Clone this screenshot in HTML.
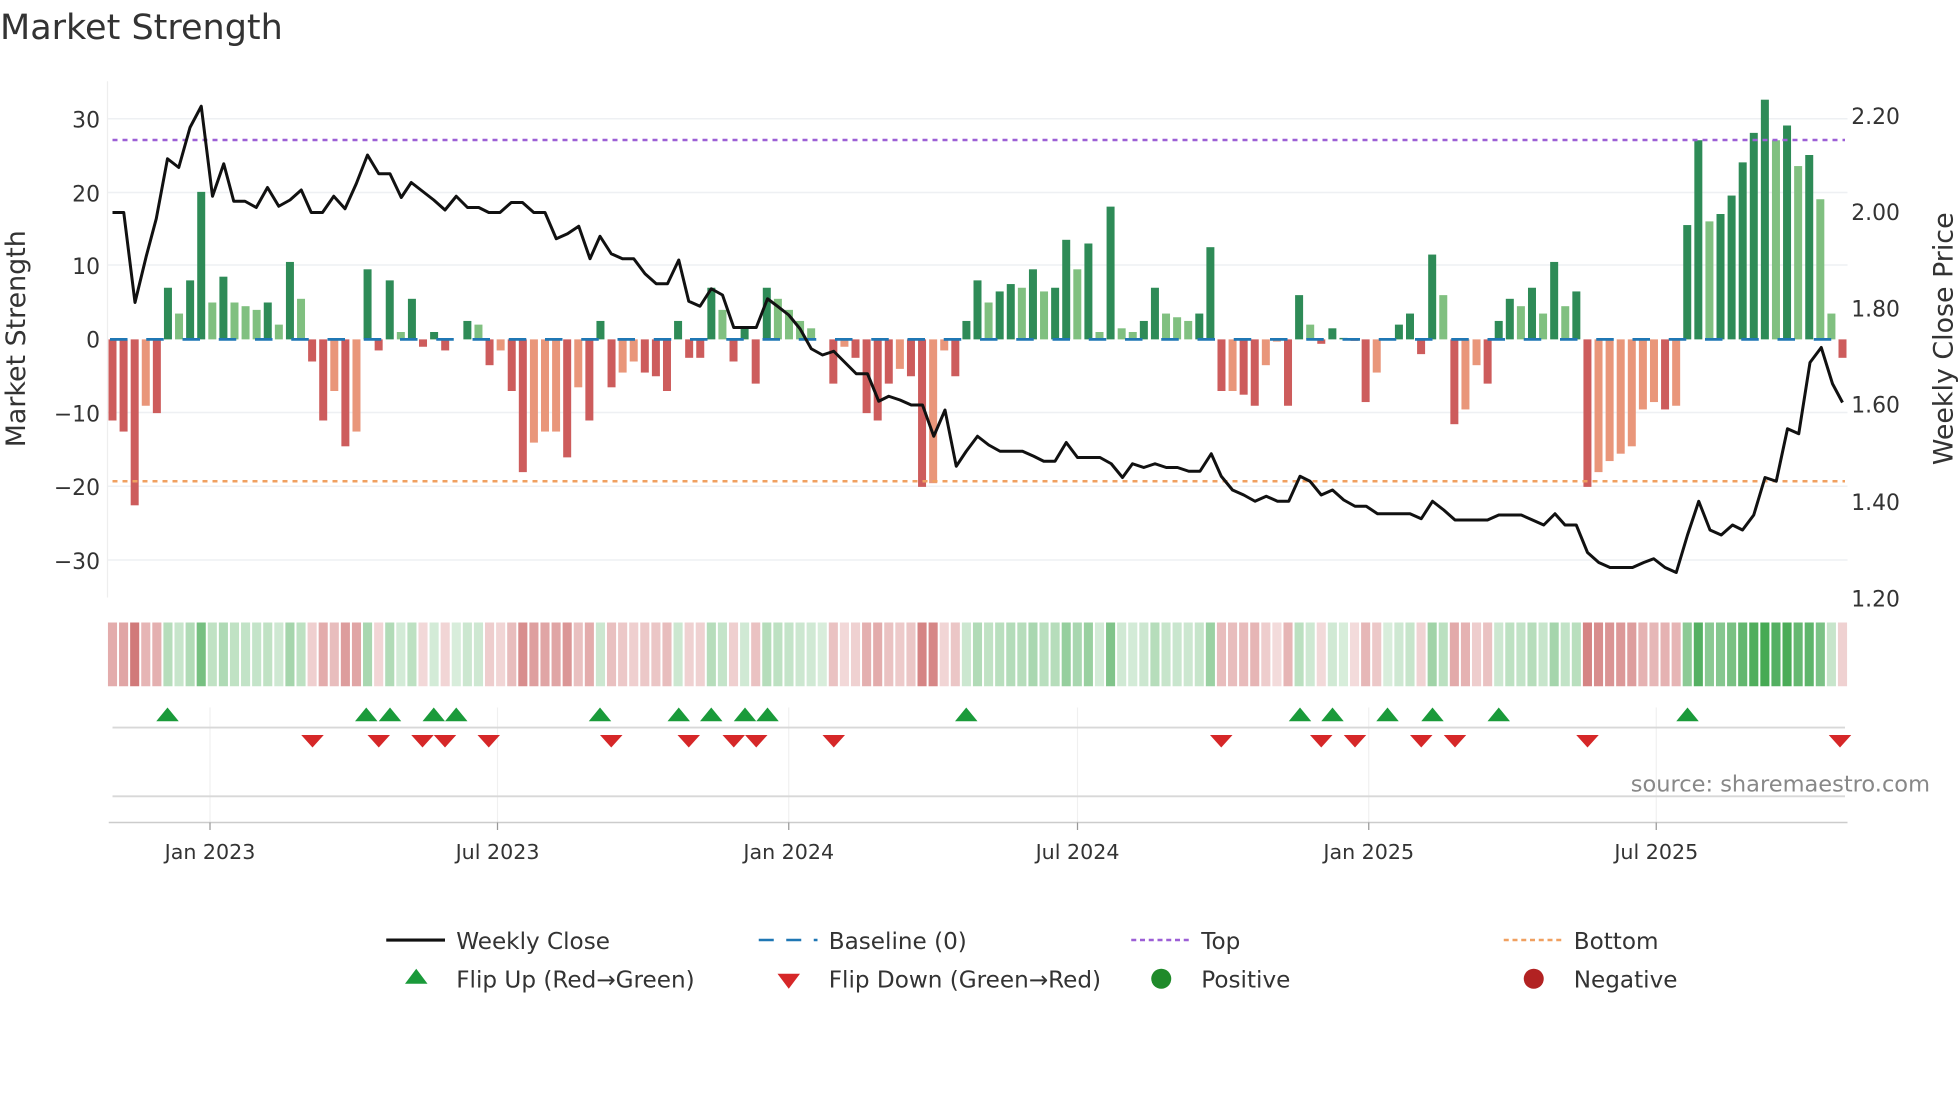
<!DOCTYPE html>
<html><head><meta charset="utf-8"><style>
html,body{margin:0;padding:0;background:#fff;}
svg{display:block;font-family:"DejaVu Sans","Liberation Sans",sans-serif;}
</style></head><body>
<svg id="s" width="1960" height="1102" viewBox="0 0 1568 881.6" xmlns="http://www.w3.org/2000/svg">
<rect width="1568" height="882" fill="#fff"/>
<text x="0" y="31" font-size="28" fill="#333">Market Strength</text>
<g stroke="#eef0f3" stroke-width="1.2">
<line x1="86" x2="1478" y1="95" y2="95"/><line x1="86" x2="1478" y1="154" y2="154"/>
<line x1="86" x2="1478" y1="212" y2="212"/><line x1="86" x2="1478" y1="330" y2="330"/>
<line x1="86" x2="1478" y1="389" y2="389"/><line x1="86" x2="1478" y1="448" y2="448"/>
</g>
<line x1="86" x2="86" y1="65" y2="478" stroke="#eee" stroke-width="1"/>
<g font-size="17.5" fill="#333" text-anchor="end">
<text x="80" y="102">30</text><text x="80" y="161">20</text><text x="80" y="219">10</text>
<text x="80" y="278">0</text><text x="80" y="337">−10</text><text x="80" y="396">−20</text><text x="80" y="455">−30</text>
</g>
<g font-size="17.5" fill="#333">
<text x="1481" y="99">2.20</text><text x="1481" y="176">2.00</text><text x="1481" y="253">1.80</text>
<text x="1481" y="330">1.60</text><text x="1481" y="408">1.40</text><text x="1481" y="485">1.20</text>
</g>
<text transform="translate(20,271) rotate(-90)" font-size="21.5" fill="#333" text-anchor="middle">Market Strength</text>
<text transform="translate(1562,271) rotate(-90)" font-size="21.5" fill="#333" text-anchor="middle">Weekly Close Price</text>
<g id="bars"></g>
<line x1="88" x2="1478" y1="271.5" y2="271.5" stroke="#1f77b4" stroke-width="2.2" stroke-dasharray="14,15"/>
<line x1="90" x2="1476" y1="112" y2="112" stroke="#9c5fd6" stroke-width="2" stroke-dasharray="4,4"/>
<line x1="90" x2="1476" y1="385" y2="385" stroke="#f0a060" stroke-width="2" stroke-dasharray="4,4"/>
<polyline id="price" fill="none" stroke="#111" stroke-width="2.4" stroke-linejoin="round"/>
<g id="heat"></g>
<g stroke="#f0f0f0" stroke-width="1">
<line x1="168" x2="168" y1="566" y2="658"/><line x1="398" x2="398" y1="566" y2="658"/>
<line x1="631" x2="631" y1="566" y2="658"/><line x1="862" x2="862" y1="566" y2="658"/>
<line x1="1095" x2="1095" y1="566" y2="658"/><line x1="1325" x2="1325" y1="566" y2="658"/>
</g>
<line x1="90" x2="1476" y1="582" y2="582" stroke="#d8d8d8" stroke-width="1.5"/>
<line x1="90" x2="1476" y1="637" y2="637" stroke="#d8d8d8" stroke-width="1.5"/>
<line x1="87" x2="1478" y1="658" y2="658" stroke="#ccc" stroke-width="1.2"/>
<g id="marks"></g>
<text x="1544" y="633" font-size="18" fill="#888" text-anchor="end">source: sharemaestro.com</text>
<g stroke="#999" stroke-width="1"><line x1="168" x2="168" y1="658" y2="664"/><line x1="398" x2="398" y1="658" y2="664"/><line x1="631" x2="631" y1="658" y2="664"/><line x1="862" x2="862" y1="658" y2="664"/><line x1="1095" x2="1095" y1="658" y2="664"/><line x1="1325" x2="1325" y1="658" y2="664"/></g>
<g font-size="16.5" fill="#333" text-anchor="middle">
<text x="168" y="687">Jan 2023</text><text x="398" y="687">Jul 2023</text><text x="631" y="687">Jan 2024</text>
<text x="862" y="687">Jul 2024</text><text x="1095" y="687">Jan 2025</text><text x="1325" y="687">Jul 2025</text>
</g>
<g font-size="18.5" fill="#333">
<line x1="309" x2="356" y1="752" y2="752" stroke="#111" stroke-width="2.5"/>
<text x="365" y="759">Weekly Close</text>
<line x1="607" x2="654" y1="752" y2="752" stroke="#1f77b4" stroke-width="2" stroke-dasharray="12,10"/>
<text x="663" y="759">Baseline (0)</text>
<line x1="905" x2="952" y1="752" y2="752" stroke="#9c5fd6" stroke-width="2" stroke-dasharray="4,3"/>
<text x="961" y="759">Top</text>
<line x1="1203" x2="1250" y1="752" y2="752" stroke="#f0a060" stroke-width="2" stroke-dasharray="4,3"/>
<text x="1259" y="759">Bottom</text>
<polygon points="333,775 342,787 324,787" fill="#1a9a3a"/>
<text x="365" y="790">Flip Up (Red→Green)</text>
<polygon points="622,779 640,779 631,791" fill="#d62728"/>
<text x="663" y="790">Flip Down (Green→Red)</text>
<circle cx="929" cy="783" r="8" fill="#1f8a2a"/>
<text x="961" y="790">Positive</text>
<circle cx="1227" cy="783" r="8" fill="#b22222"/>
<text x="1259" y="790">Negative</text>
</g>
<script>
(function(){
var NS="http://www.w3.org/2000/svg";
function el(t,a,p){var e=document.createElementNS(NS,t);for(var k in a)e.setAttribute(k,a[k]);p.appendChild(e);return e;}
var d="-11D -12.5D -22.5D -9L -10D 7D 3.5L 8D 20D 5L 8.5D 5L 4.5L 4L 5D 2L 10.5D 5.5L -3D -11D -7L -14.5D -12.5L 9.5D -1.5D 8D 1L 5.5D -1D 1D -1.5D 0L 2.5D 2L -3.5D -1.5L -7D -18D -14L -12.5L -12.5L -16D -6.5L -11D 2.5D -6.5D -4.5L -3L -4.5D -5D -7D 2.5D -2.5D -2.5D 7D 4L -3D 1.5D -6D 7D 5.5L 4L 2.5L 1.5L 0L -6D -1L -2.5D -10D -11D -6D -4L -5D -20D -19.5L -1.5L -5D 2.5D 8D 5L 6.5D 7.5D 7L 9.5D 6.5L 7D 13.5D 9.5L 13D 1L 18D 1.5L 1L 2.5D 7D 3.5L 3L 2.5L 3.5D 12.5D -7D -7L -7.5D -9D -3.5L -0.3L -9D 6D 2L -0.6D 1.5D 0.2D -0.2D -8.5D -4.5L 0L 2D 3.5D -2D 11.5D 6L -11.5D -9.5L -3.5L -6D 2.5D 5.5D 4.5L 7D 3.5L 10.5D 4.5L 6.5D -20D -18L -16.5L -15.5L -14.5L -9.5L -8.5L -9.5D -9L 15.5D 27D 16L 17D 19.5D 24D 28D 32.5D 27L 29D 23.5L 25D 19L 3.5L -2.5D".split(" ");
var x0=90,st=(1474-90)/(d.length-1),bw=6.4,z=271.5,u=5.9;
var bars=document.getElementById("bars"),heat=document.getElementById("heat");
d.forEach(function(s,i){
 var v=parseFloat(s),t=s.slice(-1),x=x0+i*st;
 var c=v>=0?(t=="D"?"#2e8b57":"#80c080"):(t=="D"?"#cd5c5c":"#e9967a");
 var h=Math.abs(v)*u;
 if(h>0.3) el("rect",{x:x-bw/2,y:v>=0?z-h:z,width:bw,height:h,fill:c},bars);
 var a=Math.min(0.95,0.2+Math.abs(v)/40);
 var hc=v>=0?"rgba(60,165,75,"+a+")":"rgba(195,80,80,"+a+")";
 el("rect",{x:x-st/2+0.8,y:498,width:st-1.6,height:51,fill:hc},heat);
});
var p="90,170 99,170 108,242 117,205 125,175 134,127 143,134 152,102 161,85 170,157 179,131 187,161 196,161 205,166 214,150 223,165 232,160 241,152 249,170 258,170 267,157 276,167 285,147 294,124 303,139 312,139 321,158 329,146 338,153 347,160 356,168 365,157 374,166 383,166 391,170 400,170 409,162 418,162 427,170 436,170 445,191 454,187 463,181 472,207 480,189 489,203 498,207 507,207 516,219 525,227 534,227 543,208 551,241 560,245 569,231 578,236 587,262 596,262 605,262 614,239 622,245 631,252 640,263 649,279 658,284 667,281 676,290 685,299 694,299 703,321 711,317 720,320 729,324 738,324 747,349 756,328 765,373 773,361 782,349 791,356 800,361 809,361 818,361 827,365 835,369 844,369 853,354 862,366 871,366 880,366 889,371 898,382 906,371 915,374 924,371 933,374 942,374 951,377 960,377 969,363 977,381 986,392 995,396 1004,401 1013,397 1022,401 1031,401 1040,381 1048,385 1057,396 1066,392 1075,400 1084,405 1093,405 1102,411 1110,411 1119,411 1128,411 1137,415 1146,401 1155,408 1164,416 1173,416 1181,416 1190,416 1199,412 1208,412 1217,412 1226,416 1235,420 1244,411 1252,420 1261,420 1270,442 1279,450 1288,454 1297,454 1306,454 1315,450 1323,447 1332,454 1341,458 1350,428 1359,401 1368,424 1377,428 1386,420 1394,424 1403,412 1412,382 1421,385 1430,343 1439,347 1448,290 1457,278 1466,307 1474,322";
document.getElementById("price").setAttribute("points",p);
var m=document.getElementById("marks");
[134,293,312,347,365,480,543,569,596,614,773,1040,1066,1110,1146,1199,1350].forEach(function(x){
 el("polygon",{points:(x)+",566 "+(x+9)+",577 "+(x-9)+",577",fill:"#1a9a3a"},m);});
[250,303,338,356,391,489,551,587,605,667,977,1057,1084,1137,1164,1270,1472].forEach(function(x){
 el("polygon",{points:(x-9)+",588 "+(x+9)+",588 "+x+",598",fill:"#d62728"},m);});
})();
</script>
</svg>
</body></html>
